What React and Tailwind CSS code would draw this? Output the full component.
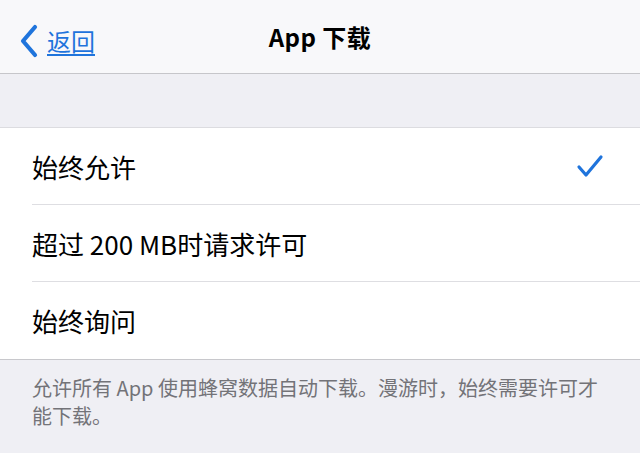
import React from "react";

const font = { fontFamily: '"Noto Sans CJK SC", "Noto Sans", sans-serif' };

const options = [
  { label: "始终允许", checked: true },
  { label: "超过 200 MB时请求许可", checked: false },
  { label: "始终询问", checked: false },
];

export default function App() {
  return (
    <div className="w-[640px] h-[453px] bg-[#efeff4] overflow-hidden" style={font}>
      <header className="relative flex items-center justify-center h-[74px] bg-[#f8f8fa] border-b border-[#c6c6ca]">
        <a className="absolute left-[18px] top-[24px] flex items-center gap-[7px] text-[#1f74dc]">
          <svg width="22" height="34" viewBox="0 0 22 34" fill="none">
            <path d="M17 3 L5 17 L17 31" stroke="#1f74dc" strokeWidth="4.2" strokeLinecap="round" strokeLinejoin="round" />
          </svg>
          <span className="text-[24px] leading-[30px] underline underline-offset-[3px] decoration-[1.5px]">返回</span>
        </a>
        <h1 className="text-[24px] font-bold text-black tracking-[0.5px]">App 下载</h1>
      </header>

      <div className="h-[54px] border-b border-[#dcdce0]" />

      <ul className="bg-white border-b border-[#c8c8cc]">
        {options.map((opt, i) => (
          <li key={opt.label} className="pl-[32px]">
            <div
              className={`flex items-center justify-between h-[77px] pr-[36px] ${
                i < options.length - 1 ? "border-b border-[#dedee2]" : ""
              }`}
            >
              <span className="text-[26px] text-black">{opt.label}</span>
              {opt.checked ? (
                <svg width="28" height="24" viewBox="0 0 28 24" fill="none">
                  <path d="M3 13 L10 21 L25 3" stroke="#1f74dc" strokeWidth="3.2" strokeLinecap="round" strokeLinejoin="round" />
                </svg>
              ) : null}
            </div>
          </li>
        ))}
      </ul>

      <p className="px-[32px] pt-[14px] pr-[40px] text-[20px] leading-[28px] text-[#737378]">
        允许所有 App 使用蜂窝数据自动下载。漫游时，始终需要许可才能下载。
      </p>
    </div>
  );
}
